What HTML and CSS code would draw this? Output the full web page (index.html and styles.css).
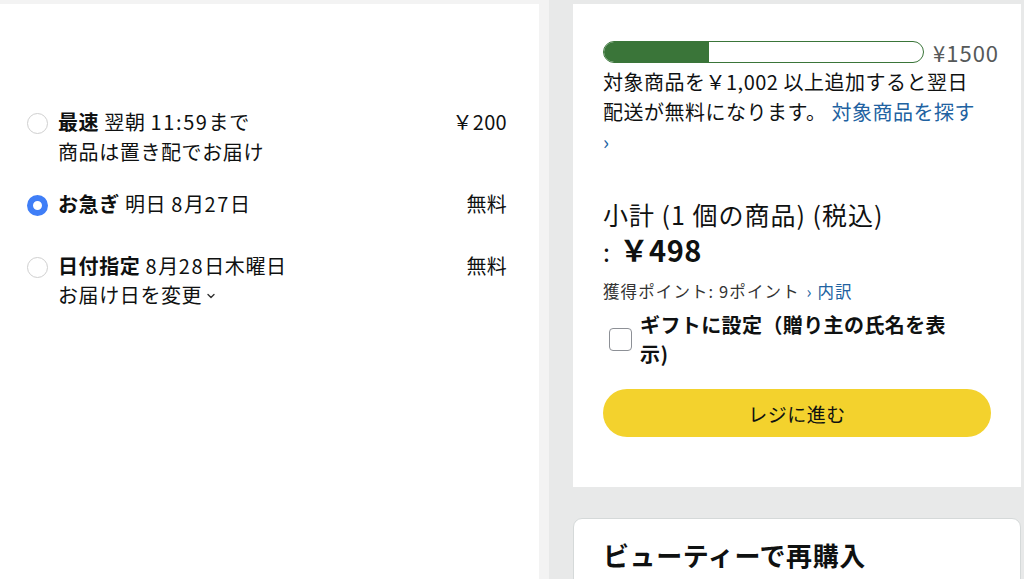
FILE: index.html
```html
<!DOCTYPE html>
<html lang="ja">
<head>
<meta charset="utf-8">
<link rel="stylesheet" href="styles.css">
</head>
<body>
<div class="page">
  <div class="left-col">
    <div class="ship-panel">
      <div class="opt opt-1">
        <span class="radio"></span>
        <div class="opt-body">
          <div class="opt-line"><span><b>最速</b> 翌朝 <span class="num">11:59</span>まで</span><span class="price">￥200</span></div>
          <div class="opt-line">商品は置き配でお届け</div>
        </div>
      </div>
      <div class="opt opt-2">
        <span class="radio on"></span>
        <div class="opt-body">
          <div class="opt-line"><span><b>お急ぎ</b> 明日 <span class="num">8</span>月<span class="num">27</span>日</span><span class="price">無料</span></div>
        </div>
      </div>
      <div class="opt opt-3">
        <span class="radio"></span>
        <div class="opt-body">
          <div class="opt-line"><span><b>日付指定</b> <span class="num">8</span>月<span class="num">28</span>日木曜日</span><span class="price">無料</span></div>
          <div class="opt-line change">お届け日を変更 <svg class="chev" width="10" height="8" viewBox="0 0 10 8"><path d="M2 2.5 L5 5.5 L8 2.5" fill="none" stroke="#333" stroke-width="1.4" stroke-linecap="round" stroke-linejoin="round"/></svg></div>
        </div>
      </div>
    </div>
  </div>
  <div class="right-col">
    <div class="card summary">
      <div class="bar-row">
        <div class="bar"><div class="bar-fill" style="width:33%"></div></div>
        <span class="bar-label">¥1500</span>
      </div>
      <p class="free-msg">対象商品を￥1,002 以上追加すると翌日<br>配送が無料になります。 <a class="link" href="#">対象商品を探す<br>›</a></p>
      <div class="subtotal">
        <div>小計 (1 個の商品) (税込)</div>
        <div>: <b class="amount">￥498</b></div>
      </div>
      <div class="points">獲得ポイント: 9ポイント <a class="link" href="#">› 内訳</a></div>
      <label class="gift">
        <span class="checkbox"></span>
        <span class="gift-text">ギフトに設定（贈り主の氏名を表示)</span>
      </label>
      <button class="checkout">レジに進む</button>
    </div>
    <div class="card rebuy">
      <h2>ビューティーで再購入</h2>
    </div>
  </div>
</div>
</body>
</html>
```

FILE: styles.css
```css
* { box-sizing: border-box; }
html, body {
  margin: 0;
  padding: 0;
  height: 100%;
  overflow: hidden;
}
body {
  background: #e8e9e9;
  font-family: "Noto Sans CJK JP", "Noto Sans", sans-serif;
  color: #0f1111;
}
.page {
  display: flex;
  gap: 24px;
  height: 579px;
}
.left-col {
  width: 549px;
  background: #f3f3f3;
  padding: 4px 10px 0 0;
}
.ship-panel {
  background: #fff;
  height: 100%;
  padding: 103px 32px 0 27px;
  font-size: 20px;
  letter-spacing: 0.6px;
  line-height: 30px;
}
.num { letter-spacing: 1.6px; }
.opt {
  display: flex;
  align-items: flex-start;
  gap: 10px;
}
.opt-2 { margin-top: 22px; }
.opt-3 { margin-top: 32px; }
.opt-3 .opt-line + .opt-line { line-height: 28px; }
.radio {
  flex: none;
  width: 21px;
  height: 21px;
  margin-top: 6px;
  border-radius: 50%;
  border: 1px solid #cfcfcf;
  background: #fff;
}
.radio.on {
  border: 6.5px solid #3f7ef7;
  background: #fff;
}
.opt-body { flex: 1; }
.opt-line {
  display: flex;
  justify-content: space-between;
}
.opt-line b { font-weight: 700; }
.price { letter-spacing: 0.3px; }
.change { justify-content: flex-start; align-items: center; gap: 4px; }
.chev { margin-top: 2px; }
.right-col {
  width: 448px;
  padding-top: 4px;
  display: flex;
  flex-direction: column;
  gap: 31px;
}
.card { background: #fff; }
.summary {
  padding: 37px 30px 50px 30px;
}
.bar-row {
  display: flex;
  align-items: center;
  gap: 9px;
  height: 22px;
}
.bar {
  flex: none;
  width: 321px;
  height: 22px;
  border: 1.5px solid #3a7539;
  border-radius: 11px;
  overflow: hidden;
  background: #fff;
}
.bar-fill {
  height: 100%;
  background: #3a7539;
}
.bar-label {
  font-size: 22px;
  letter-spacing: 1px;
  color: #565959;
  line-height: 22px;
}
.free-msg {
  margin: 4px 0 0 0;
  font-size: 20px;
  letter-spacing: 0.5px;
  line-height: 30px;
  white-space: nowrap;
}
.link {
  color: #2162a1;
  text-decoration: none;
}
.subtotal {
  margin-top: 40px;
  font-size: 25px;
  letter-spacing: 1px;
  line-height: 35px;
}
.amount {
  font-size: 29px;
  font-weight: 700;
  letter-spacing: 0.5px;
  margin-left: 2px;
}
.points {
  margin-top: 10px;
  font-size: 16.5px;
  letter-spacing: 1.1px;
  line-height: 24px;
  color: #333;
}
.points .link { margin-left: 2px; }
.gift {
  display: flex;
  align-items: center;
  gap: 8px;
  margin-top: 7px;
  padding-left: 6px;
}
.checkbox {
  flex: none;
  width: 23px;
  height: 23px;
  border: 1.5px solid #8d9096;
  border-radius: 4px;
  background: #fff;
}
.gift-text {
  max-width: 322px;
  font-size: 20px;
  letter-spacing: 0.4px;
  font-weight: 700;
  line-height: 29px;
}
.checkout {
  display: block;
  width: 100%;
  height: 48px;
  margin-top: 21px;
  border: none;
  border-radius: 24px;
  background: #f3d22d;
  font-family: inherit;
  font-size: 19px;
  letter-spacing: 0.5px;
  color: #0f1111;
}
.rebuy {
  flex: 1;
  border: 1px solid #d5d9d9;
  border-radius: 9px;
  padding: 18px 29px;
}
.rebuy h2 {
  margin: 0;
  font-size: 26px;
  letter-spacing: 0.6px;
  font-weight: 700;
  line-height: 36px;
}
```
